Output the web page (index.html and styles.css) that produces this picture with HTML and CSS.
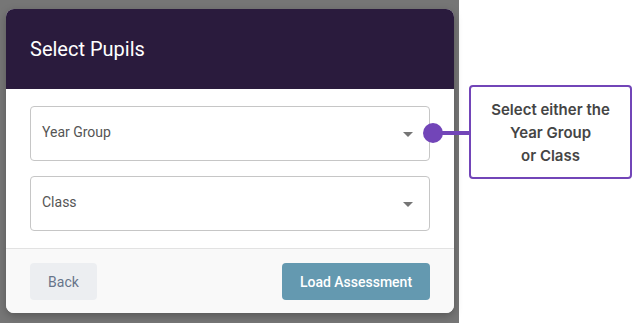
FILE: index.html
```html
<!DOCTYPE html>
<html lang="en">
<head>
    <meta charset="UTF-8">
    <meta name="viewport" content="width=device-width, initial-scale=1.0">
    <title>Select Pupils</title>
    <link rel="stylesheet" href="styles.css">
</head>
<body>
    <div class="backdrop">
        <!-- Modal dialog -->
        <div class="modal">
            <div class="modal-header">
                <h2>Select Pupils</h2>
            </div>
            <div class="modal-body">
                <div class="select">
                    <span class="label">Year Group</span>
                    <span class="arrow"></span>
                    <span class="pin"></span>
                </div>
                <div class="select">
                    <span class="label">Class</span>
                    <span class="arrow"></span>
                </div>
            </div>
            <div class="modal-footer">
                <button type="button" class="btn-back">Back</button>
                <button type="button" class="btn-load">Load Assessment</button>
            </div>
        </div>
    </div>
    <!-- Help callout -->
    <div class="side">
        <div class="callout">Select either the<br>Year Group<br>or Class</div>
    </div>
</body>
</html>
```

FILE: styles.css
```css
/* General page */
body {
    margin: 0;
    display: flex;
    height: 323px;
    overflow: hidden;
    background: #fff;
    font-family: Roboto, "Liberation Sans", sans-serif;
}

/* Grey overlay behind the modal */
.backdrop {
    width: 459px;
    flex-shrink: 0;
    background: #767676;
    padding: 9px 5px 0 6px;
    box-sizing: border-box;
}

.modal {
    background: #fff;
    border-radius: 8px;
    box-shadow: 0 3px 8px rgba(0, 0, 0, 0.25);
}

.modal-header {
    background: #2a1b3d;
    height: 80px;
    border-radius: 8px 8px 0 0;
    display: flex;
    align-items: center;
    padding: 0 24px;
}

.modal-header h2 {
    margin: 0 0 1px;
    color: #fff;
    font-size: 20px;
    font-weight: 400;
}

.modal-body {
    padding: 17px 24px;
    display: flex;
    flex-direction: column;
    gap: 15px;
    border-bottom: 1px solid #e2e2e2;
}

/* Dropdown boxes */
.select {
    position: relative;
    height: 53px;
    border: 1px solid #c6c6c6;
    border-radius: 4px;
    display: flex;
    align-items: center;
    justify-content: space-between;
    padding: 0 16px 0 11px;
    font-size: 14px;
    color: #555;
}

.select .label {
    margin-bottom: 4px;
}

.arrow {
    width: 0;
    height: 0;
    border-left: 5px solid transparent;
    border-right: 5px solid transparent;
    border-top: 5px solid #757575;
    margin-top: 1px;
}

/* Purple marker pointing at the callout */
.pin {
    position: absolute;
    left: 392px;
    top: 16px;
    width: 20px;
    height: 20px;
    border-radius: 50%;
    background: #7245b8;
}

.pin::after {
    content: "";
    position: absolute;
    left: 10px;
    top: 8px;
    width: 36px;
    height: 4px;
    background: #7245b8;
}

.modal-footer {
    background: #f9f9f9;
    border-radius: 0 0 8px 8px;
    display: flex;
    justify-content: space-between;
    padding: 14px 24px 13px;
}

.modal-footer button {
    height: 37px;
    border: none;
    border-radius: 4px;
    font-family: inherit;
    font-size: 14px;
    cursor: pointer;
}

.btn-back {
    width: 67px;
    background: #eceef1;
    color: #67748a;
}

.btn-load {
    width: 148px;
    background: #6499b0;
    color: #fff;
    font-weight: 500;
}

/* Right-hand help text */
.side {
    flex: 1;
    padding: 85px 0 0 10px;
}

.callout {
    width: 159px;
    height: 90px;
    border: 2px solid #7245b8;
    border-radius: 4px;
    display: flex;
    align-items: center;
    justify-content: center;
    text-align: center;
    font-family: Inter, "Liberation Sans", sans-serif;
    font-weight: 600;
    font-size: 15px;
    line-height: 23px;
    color: #454545;
}
```
